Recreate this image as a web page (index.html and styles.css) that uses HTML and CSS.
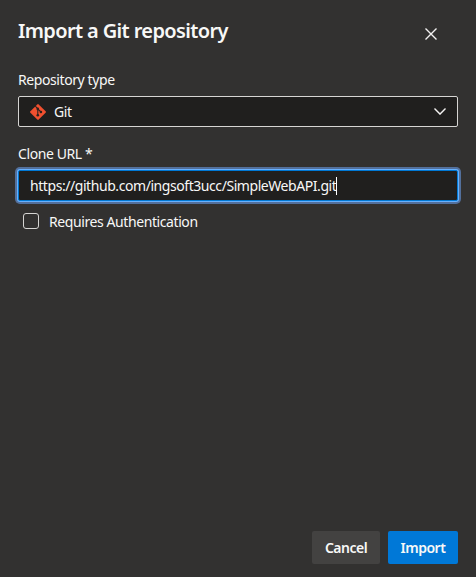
FILE: index.html
```html
<!DOCTYPE html>
<html lang="en">
<head>
<meta charset="utf-8">
<title>Import a Git repository</title>
<link rel="stylesheet" href="styles.css">
</head>
<body>
<main class="panel">
  <header class="header">
    <h1 class="title">Import a Git repository</h1>
    <button class="close" aria-label="Close">
      <svg width="12" height="12" viewBox="0 0 12 12"><path d="M.5.5l11 11M11.5.5l-11 11"/></svg>
    </button>
  </header>
  <div class="label">Repository type</div>
  <div class="field select">
    <svg class="git" width="16" height="16" viewBox="0 0 16 16">
      <path class="git-bg" d="M7.3.4a1 1 0 0 1 1.4 0l6.9 6.9a1 1 0 0 1 0 1.4l-6.9 6.9a1 1 0 0 1-1.4 0L.4 8.7a1 1 0 0 1 0-1.4z"/>
      <path class="git-line" d="M5.3 2.2l2.5 2.6v6.4M7.8 4.8l3 3.1"/>
      <circle cx="7.8" cy="4.9" r="1.3"/><circle cx="7.8" cy="11.3" r="1.3"/><circle cx="10.9" cy="8" r="1.3"/>
    </svg>
    <span class="value">Git</span>
    <svg class="chevron" width="12" height="7" viewBox="0 0 12 7"><path d="M.5.6L6 6.1 11.5.6"/></svg>
  </div>
  <div class="label clone">Clone URL *</div>
  <div class="field input"><span class="url">https://github.com/ingsoft3ucc/SimpleWebAPI.git</span><i class="caret"></i></div>
  <div class="check-row"><i class="box"></i><span class="auth">Requires Authentication</span></div>
  <footer class="footer">
    <button class="btn cancel">Cancel</button>
    <button class="btn import">Import</button>
  </footer>
</main>
</body>
</html>
```
FILE: styles.css
```css
* { box-sizing: border-box; }
body { margin: 0; background: #323130; }
.panel {
  display: flex;
  flex-direction: column;
  width: 476px;
  height: 577px;
  padding: 16px 18px 13px;
  color: #f8f8f7;
  font: 14px/20px "Noto Sans", "Open Sans", sans-serif;
  letter-spacing: -.41px;
  white-space: nowrap;
}
.header { display: flex; justify-content: space-between; height: 53px; }
.title { margin: 0; font-size: 20px; line-height: 29px; font-weight: 600; letter-spacing: -.63px; }
.close { width: 32px; height: 32px; margin: 2px 11px 0 0; padding: 0; border: 0; background: none; display: flex; align-items: center; justify-content: center; }
.close path, .chevron path { fill: none; stroke: #f3f2f1; stroke-width: 1.4; }
.label { height: 27px; line-height: 22px; }
.field { display: flex; align-items: center; flex: none; height: 31px; border: 1px solid #d6d5d3; border-radius: 2px; background: #201f1e; padding: 0 11px; }
.value, .url, .auth { line-height: 22px; }
.value, .url { padding-top: 1px; }
.auth { padding-top: 1px; }
.url { letter-spacing: -.435px; }
.git { margin-right: 8px; }
.git-bg { fill: #f1502f; }
.git-line { fill: none; stroke: #2b211e; stroke-width: 1.1; }
.git circle { fill: #2b211e; }
.chevron { margin-left: auto; }
.clone { margin-top: 16px; }
.input { border-color: #0078d4; box-shadow: 0 0 0 1px #67b1ff, 0 0 0 3px #53709c; }
.caret { width: 1px; height: 18px; background: #fff; }
.check-row { display: flex; align-items: center; height: 20px; margin-top: 10px; padding-left: 5px; }
.box { width: 16px; height: 16px; margin-right: 10px; border: 1px solid #d6d5d3; border-radius: 3px; }
.footer { display: flex; justify-content: flex-end; gap: 8px; margin-top: auto; }
.btn { height: 33px; padding: 0; border: 0; border-radius: 2px; color: #f8f8f7; font: 600 14px/20px "Noto Sans", "Open Sans", sans-serif; letter-spacing: -.5px; }
.cancel { width: 68px; background: #434241; }
.import { width: 70px; background: #0078d7; }
```
